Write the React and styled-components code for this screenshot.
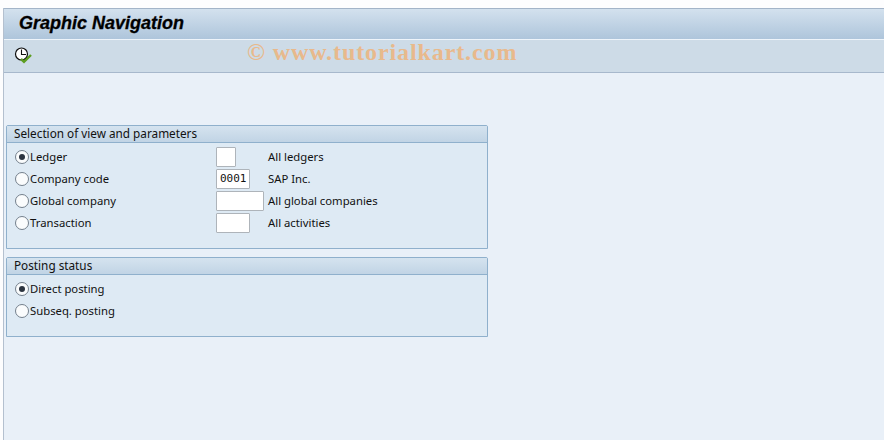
import React from "react"
import styled, { createGlobalStyle } from "styled-components"

const GlobalStyle = createGlobalStyle`
  html, body {
    margin: 0;
    padding: 0;
    background: #fdfdfe;
  }
  body {
    font-family: "Noto Sans", "DejaVu Sans", sans-serif;
  }
`;

const Page = styled.div`
  width: 884px;
  height: 440px;
  padding-top: 8px;
  padding-left: 3px;
  box-sizing: border-box;
  overflow: hidden;
`;

const Window = styled.div`
  height: 432px;
  background: #e9f0f8;
  border-left: 1px solid #b4c0cf;
`;

const TitleBar = styled.div`
  height: 32px;
  box-sizing: border-box;
  padding: 4px 0 0 15px;
  border-top: 1px solid #a3b4c8;
  border-bottom: 1px solid #eef4fa;
  background: linear-gradient(#d3e1ee, #aec5db);
`;

const Title = styled.h1`
  margin: 0;
  font-family: "Liberation Sans", Arial, sans-serif;
  font-size: 18px;
  line-height: 20px;
  font-weight: bold;
  font-style: italic;
  color: #000;
  -webkit-text-stroke: 0.3px #000;
`;

const Toolbar = styled.div`
  height: 33px;
  box-sizing: border-box;
  display: flex;
  align-items: center;
  padding-left: 10px;
  border-bottom: 1px solid #a7b8cc;
  background: #cddbe7;
`;

const Watermark = styled.span`
  margin: 0 0 8px 213px;
  font-family: "Liberation Serif", "Times New Roman", serif;
  font-size: 24px;
  font-weight: bold;
  letter-spacing: 0.9px;
  color: #e8b98c;
`;

const Content = styled.div`
  display: flex;
  flex-direction: column;
  gap: 8px;
  padding: 52px 0 0 2px;
  width: 482px;
`;

const Group = styled.section`
  box-sizing: border-box;
  height: ${(p) => p.$height}px;
  border: 1px solid #8fb0cc;
  border-radius: 2px 2px 0 0;
  background: #deeaf4;
`;

const GroupHeader = styled.div`
  height: 17px;
  box-sizing: border-box;
  padding-left: 7px;
  border-bottom: 1px solid #8fb0cc;
  background: linear-gradient(#d5e3ef, #c1d4e5);
  font-size: 11.75px;
  line-height: 14px;
  color: #111;
`;

const GroupBody = styled.div`
  display: flex;
  flex-direction: column;
  padding-top: 3px;
`;

const Row = styled.div`
  height: 22px;
  display: grid;
  grid-template-columns: 209px 52px 1fr;
  align-items: center;
  font-size: 11.3px;
  color: #111;
`;

const RowText = styled.span`
  margin-bottom: 2px;
`;

const RadioLabel = styled.label`
  display: flex;
  align-items: center;
  gap: 1px;
  padding-left: 8px;
`;

const Radio = styled.span`
  width: 12px;
  height: 12px;
  flex: none;
  display: flex;
  align-items: center;
  justify-content: center;
  border: 1px solid #74808c;
  border-radius: 50%;
  background: #fafcfd;

  &::after {
    content: "";
    display: ${(p) => (p.$checked ? "block" : "none")};
    width: 6px;
    height: 6px;
    border-radius: 50%;
    background: #2c3440;
  }
`;

const Field = styled.div`
  width: ${(p) => p.$width}px;
  height: 20px;
  box-sizing: border-box;
  padding-left: 3px;
  border: 1px solid #aeb4ba;
  border-radius: 1px;
  background: #fff;
  font-family: "DejaVu Sans Mono", "Liberation Mono", monospace;
  font-size: 11px;
  line-height: 18px;
  color: #111;
`;

const ClockCheckIcon = () => (
  <svg width="20" height="20" viewBox="0 0 20 20" aria-hidden="true">
    <circle cx="7.5" cy="8" r="6" fill="#fff" stroke="#111" strokeWidth="1.2" />
    <path d="M7.5 3.5V8.5H12" fill="none" stroke="#111" strokeWidth="1.1" />
    <path d="M7 13l3 2.8 7-6.8" fill="none" stroke="#5d9e22" strokeWidth="2.4" />
  </svg>
);

const viewRows = [
  { label: "Ledger", width: 20, value: "", text: "All ledgers", checked: true },
  { label: "Company code", width: 34, value: "0001", text: "SAP Inc." },
  { label: "Global company", width: 48, value: "", text: "All global companies" },
  { label: "Transaction", width: 34, value: "", text: "All activities" },
];

const App = () => (
  <Page>
    <GlobalStyle />
    <Window>
      <TitleBar>
        <Title>Graphic Navigation</Title>
      </TitleBar>
      <Toolbar>
        <ClockCheckIcon />
        <Watermark>© www.tutorialkart.com</Watermark>
      </Toolbar>
      <Content>
        <Group $height={124}>
          <GroupHeader>Selection of view and parameters</GroupHeader>
          <GroupBody>
            {viewRows.map((row) => (
              <Row key={row.label}>
                <RadioLabel>
                  <Radio $checked={row.checked} />
                  <RowText>{row.label}</RowText>
                </RadioLabel>
                <Field $width={row.width}>{row.value}</Field>
                <RowText>{row.text}</RowText>
              </Row>
            ))}
          </GroupBody>
        </Group>
        <Group $height={80}>
          <GroupHeader>Posting status</GroupHeader>
          <GroupBody>
            <Row>
              <RadioLabel>
                <Radio $checked />
                <RowText>Direct posting</RowText>
              </RadioLabel>
            </Row>
            <Row>
              <RadioLabel>
                <Radio />
                <RowText>Subseq. posting</RowText>
              </RadioLabel>
            </Row>
          </GroupBody>
        </Group>
      </Content>
    </Window>
  </Page>
)

export default App
